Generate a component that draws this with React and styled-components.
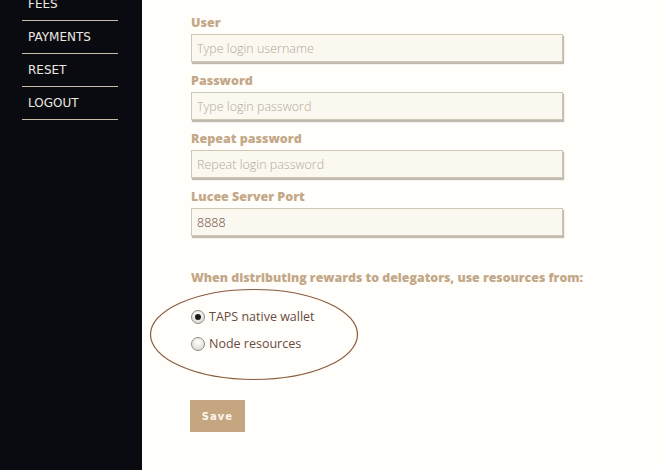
import React from 'react';
import styled, { createGlobalStyle } from 'styled-components';

const GlobalStyle = createGlobalStyle`
  html, body {
    margin: 0;
    padding: 0;
    height: 100%;
    overflow: hidden;
  }
  #root {
    height: 100%;
  }
`;

const COLOURS = {
  SIDEBAR: '#0a0b10',
  LINE: '#c9bca8',
  TAN: '#c3a888',
  BUTTON: '#c5a680',
  INPUT_BG: '#fbf8f0',
  INPUT_BORDER: '#cfc6b6',
  PLACEHOLDER: '#b3a898',
  BROWN: '#6a4a3e',
  ELLIPSE: '#8a5a3e',
};

const Page = styled.div`
  display: flex;
  flex-direction: row;
  height: 470px;
  background: #fffefb;
`;

const Sidebar = styled.nav`
  width: 142px;
  flex-shrink: 0;
  background: ${COLOURS.SIDEBAR};
  padding: 0 24px 0 22px;
  box-sizing: border-box;
`;

const NavMenu = styled.ul`
  list-style: none;
  margin: -12px 0 0 0;
  padding: 0;
`;

const NavMenuItem = styled.li`
  height: 32px;
  display: flex;
  align-items: center;
  padding-left: 6px;
  border-bottom: 1px solid ${COLOURS.LINE};
  font-family: 'DejaVu Sans', sans-serif;
  font-size: 12px;
  color: #ece8e0;
`;

const Main = styled.main`
  flex: 1;
  padding: 15px 0 0 49px;
`;

const Field = styled.div`
  display: flex;
  flex-direction: column;
  margin-bottom: 11px;
`;

const Label = styled.label`
  font-family: 'Open Sans', sans-serif;
  font-weight: 800;
  font-size: 12.5px;
  line-height: 16px;
  color: ${COLOURS.TAN};
  margin-bottom: 3px;
`;

const Input = styled.input`
  width: 372px;
  height: 28px;
  box-sizing: border-box;
  background: ${COLOURS.INPUT_BG};
  border: 1px solid ${COLOURS.INPUT_BORDER};
  box-shadow: 1px 2px 1px rgba(120, 105, 80, 0.45);
  padding: 0 5px;
  font-family: 'Open Sans', sans-serif;
  font-weight: 300;
  font-size: 12.5px;
  color: ${COLOURS.BROWN};
  outline: none;
  &::placeholder {
    color: ${COLOURS.PLACEHOLDER};
  }
`;

const Question = styled.p`
  margin: 34px 0 0 0;
  font-family: 'Open Sans', sans-serif;
  font-weight: 800;
  font-size: 12.35px;
  line-height: 16px;
  color: ${COLOURS.TAN};
`;

const RadioGroup = styled.div`
  position: relative;
  margin-top: 17px;
  width: 170px;
`;

const Ellipse = styled.svg`
  position: absolute;
  left: -43px;
  top: -16px;
  pointer-events: none;
`;

const RadioRow = styled.label`
  display: flex;
  align-items: center;
  height: 27px;
  gap: 4px;
  font-family: 'Open Sans', sans-serif;
  font-size: 12.5px;
  color: ${COLOURS.BROWN};
`;

const RadioDot = styled.span`
  width: 14px;
  height: 14px;
  box-sizing: border-box;
  border-radius: 50%;
  border: 1px solid #8f8a84;
  background: radial-gradient(circle at 50% 35%, #ffffff 0%, #e4e0da 70%, #cfcac2 100%);
  display: flex;
  align-items: center;
  justify-content: center;
  &::after {
    content: '';
    width: 6px;
    height: 6px;
    border-radius: 50%;
    background: ${(props) => (props.checked ? '#1a1a1a' : 'transparent')};
  }
`;

const SaveButton = styled.button`
  margin-top: 43px;
  margin-left: -1px;
  width: 55px;
  height: 32px;
  border: 0;
  background: ${COLOURS.BUTTON};
  color: #fbf6ee;
  font-family: 'DejaVu Sans', sans-serif;
  font-weight: bold;
  font-size: 10px;
  letter-spacing: 1px;
`;

const fields = [
  { label: 'User', placeholder: 'Type login username' },
  { label: 'Password', placeholder: 'Type login password' },
  { label: 'Repeat password', placeholder: 'Repeat login password' },
  { label: 'Lucee Server Port', value: '8888' },
];

const App = () => (
  <Page>
    <GlobalStyle />
    <Sidebar>
      <NavMenu>
        {['FEES', 'PAYMENTS', 'RESET', 'LOGOUT'].map((item) => (
          <NavMenuItem key={item}>{item}</NavMenuItem>
        ))}
      </NavMenu>
    </Sidebar>
    <Main>
      {fields.map((f) => (
        <Field key={f.label}>
          <Label>{f.label}</Label>
          <Input placeholder={f.placeholder} defaultValue={f.value} />
        </Field>
      ))}
      <Question>When distributing rewards to delegators, use resources from:</Question>
      <RadioGroup>
        <Ellipse width="212" height="95" viewBox="0 0 212 95">
          <ellipse cx="106" cy="47.5" rx="103.5" ry="45" fill="none" stroke={COLOURS.ELLIPSE} strokeWidth="1.2" />
        </Ellipse>
        <RadioRow>
          <RadioDot checked />
          TAPS native wallet
        </RadioRow>
        <RadioRow>
          <RadioDot />
          Node resources
        </RadioRow>
      </RadioGroup>
      <SaveButton>Save</SaveButton>
    </Main>
  </Page>
);

export default App;
